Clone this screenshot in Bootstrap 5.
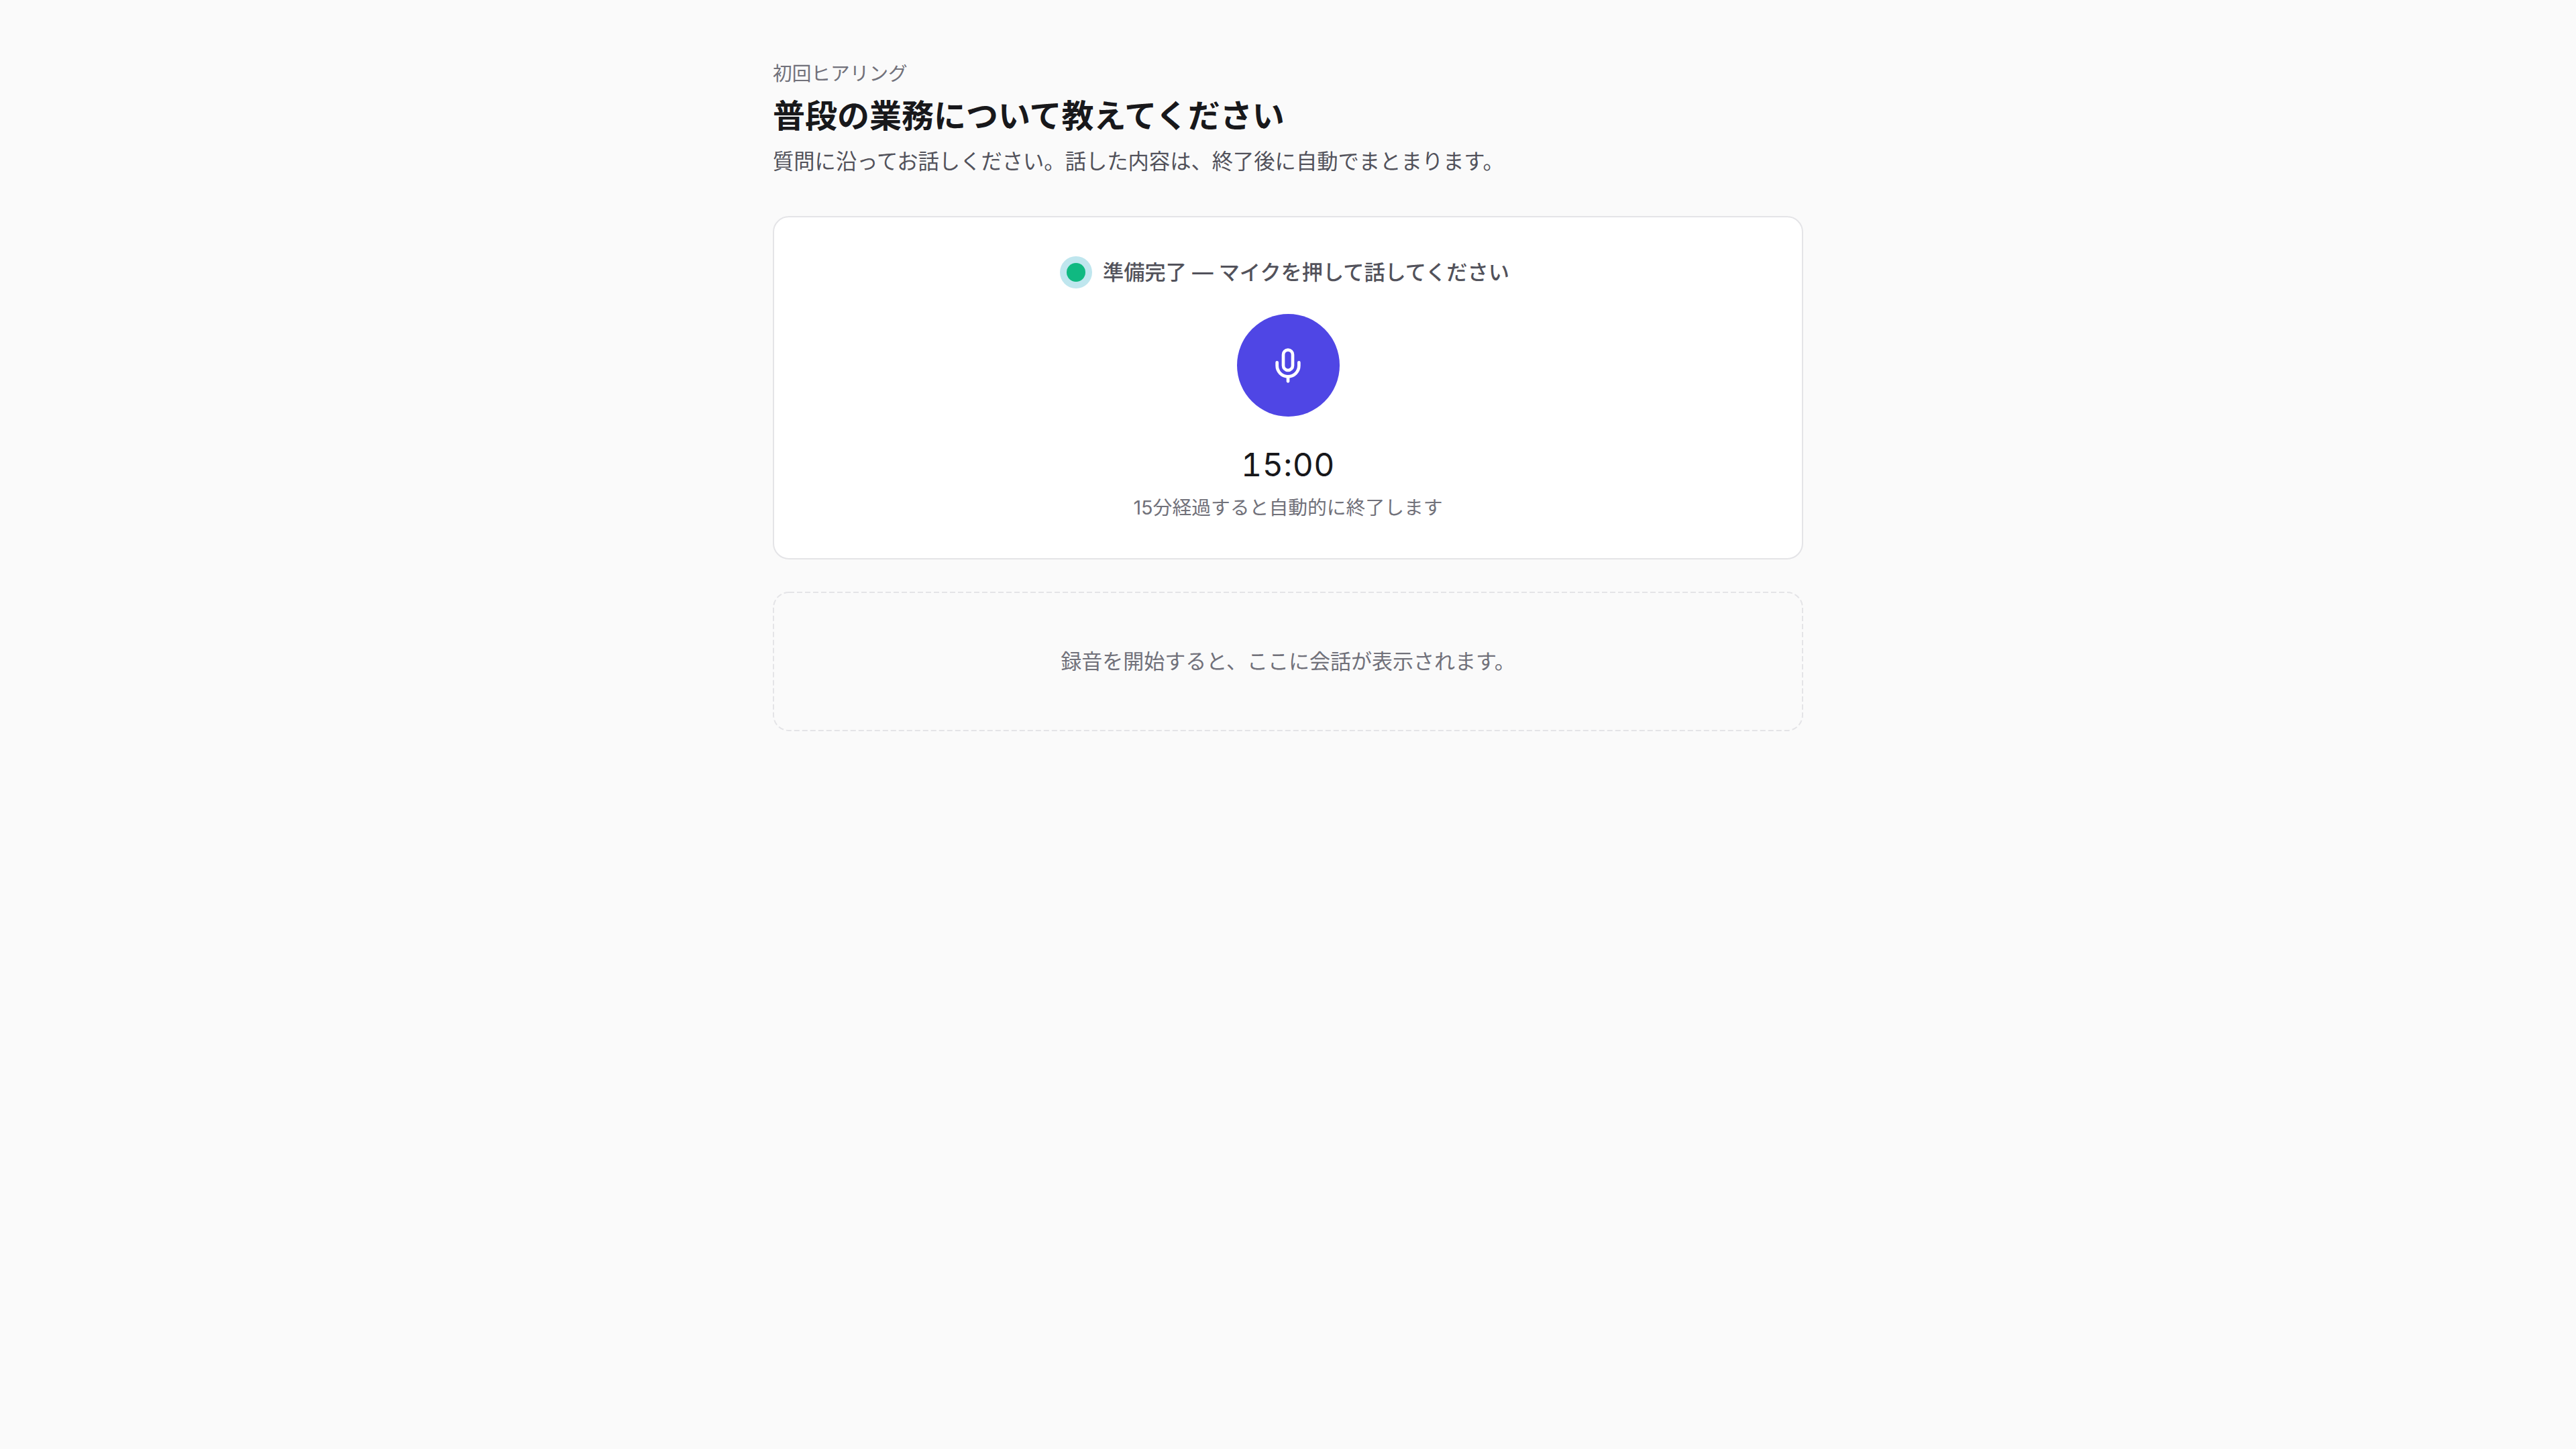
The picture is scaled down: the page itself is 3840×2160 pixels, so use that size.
<!DOCTYPE html>
<html lang="ja">

<head>
    <meta charset="UTF-8">
    <meta name="viewport" content="width=device-width, initial-scale=1">
    <title>初回ヒアリング</title>
    <link href="https://cdn.jsdelivr.net/npm/bootstrap@5.3.3/dist/css/bootstrap.min.css" rel="stylesheet">
    <style>
        body {
            background: #fafafa;
            font-family: Inter, "Noto Sans CJK JP", sans-serif;
            min-height: 2160px;
        }

        .page-wrap {
            width: 1536px;
            padding-top: 90px;
        }

        .eyebrow {
            font-size: 28.7px;
            line-height: 40px;
            color: #71717a;
        }

        .page-title {
            font-size: 48px;
            line-height: 64px;
            font-weight: 600;
            color: #18181b;
            margin: 11px 0 0;
        }

        .page-lead {
            font-size: 31.3px;
            line-height: 44px;
            color: #52525b;
            margin: 14px 0 0;
        }

        .rec-card {
            margin-top: 59px;
            height: 512px;
            padding-top: 56px;
            background: #fff;
            border: 2px solid #e4e4e7;
            border-radius: 24px;
        }

        .status-row {
            gap: 26px;
            font-size: 31.2px;
            line-height: 52px;
            font-weight: 500;
            color: #52525b;
        }

        .status-dot {
            width: 28px;
            height: 28px;
            border-radius: 50%;
            background: #10b981;
            box-shadow: 0 0 0 10px #bfe6ee;
        }

        .mic-btn {
            width: 153px;
            height: 153px;
            margin-top: 36px;
            background: #4f46e5;
            border: 0;
            color: #fff;
        }

        .mic-btn svg {
            width: 56px;
            height: 56px;
        }

        .timer {
            margin-top: 42px;
            font-size: 48px;
            line-height: 60px;
            font-variant-numeric: tabular-nums;
            letter-spacing: .5px;
            color: #18181b;
        }

        .timer-note {
            margin-top: 14px;
            font-size: 28.8px;
            line-height: 40px;
            color: #71717a;
        }

        /* svg background: a css dashed border can't give the 8/4 dash */
        .empty-box {
            margin-top: 48px;
            height: 208px;
            background: url("data:image/svg+xml,%3Csvg xmlns='http://www.w3.org/2000/svg' width='1536' height='208'%3E%3Crect x='1' y='1' width='1534' height='206' rx='23' fill='none' stroke='%23e4e4e7' stroke-width='2' stroke-dasharray='8 4'/%3E%3C/svg%3E") no-repeat;
            font-size: 31px;
            color: #71717a;
        }
    </style>
</head>

<body>
    <main class="page-wrap mx-auto">
        <div class="eyebrow">初回ヒアリング</div>
        <h1 class="page-title">普段の業務について教えてください</h1>
        <p class="page-lead">質問に沿ってお話しください。話した内容は、終了後に自動でまとまります。</p>

        <section class="rec-card d-flex flex-column align-items-center">
            <div class="status-row d-flex align-items-center">
                <span class="status-dot"></span>
                <span>準備完了 — マイクを押して話してください</span>
            </div>
            <button type="button" class="mic-btn rounded-circle d-flex align-items-center justify-content-center" aria-label="録音">
                <svg viewBox="0 0 24 24" fill="none" stroke="currentColor" stroke-width="2" stroke-linecap="round" stroke-linejoin="round">
                    <path d="M12 2a3 3 0 0 0-3 3v7a3 3 0 0 0 6 0V5a3 3 0 0 0-3-3Z"></path>
                    <path d="M19 10v2a7 7 0 0 1-14 0v-2"></path>
                    <line x1="12" y1="19" x2="12" y2="22"></line>
                </svg>
            </button>
            <div class="timer">15:00</div>
            <div class="timer-note">15分経過すると自動的に終了します</div>
        </section>

        <section class="empty-box d-flex align-items-center justify-content-center">録音を開始すると、ここに会話が表示されます。</section>
    </main>
    <script src="https://cdn.jsdelivr.net/npm/bootstrap@5.3.3/dist/js/bootstrap.bundle.min.js"></script>
</body>

</html>
